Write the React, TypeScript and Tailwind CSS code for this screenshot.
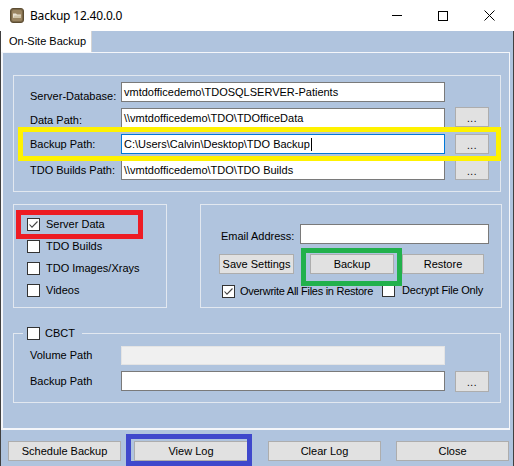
import React from "react";

const Check = ({ checked = false }: { checked?: boolean }) => (
  <span className="w-[13px] h-[13px] border border-[#333333] bg-white flex items-center justify-center shrink-0">
    {checked && (
      <svg width="11" height="11" viewBox="0 0 11 11">
        <polyline points="1.5,5.5 4,8.2 9.5,2.5" fill="none" stroke="#444444" strokeWidth="1.1" />
      </svg>
    )}
  </span>
);

const Btn = ({ children, className = "" }: { children: React.ReactNode; className?: string }) => (
  <div className={`h-[20px] bg-[#e1e1e1] border border-[#adadad] flex items-center justify-center shrink-0 ${className}`}>
    {children}
  </div>
);

const Dots = () => <span className="text-[10px] leading-[10px] pt-[3px] tracking-[0.5px]">...</span>;

const TextBox = ({
  value = "",
  className = "",
  focus = false,
  disabled = false,
}: {
  value?: string;
  className?: string;
  focus?: boolean;
  disabled?: boolean;
}) => (
  <div
    className={`h-[20px] border flex items-center pl-[2px] whitespace-nowrap overflow-hidden shrink-0 ${
      disabled ? "bg-[#f0f0f0] border-[#e4e4e4]" : "bg-white"
    } ${focus ? "border-[#0078d7]" : disabled ? "" : "border-[#7a7a7a]"} ${className}`}
  >
    <span>{value}</span>
    {focus && <span className="w-px h-[13px] bg-black ml-px" />}
  </div>
);

export default function App() {
  const groupBorder = "border border-[#e2e8f0]";
  return (
    <div className="relative w-[514px] h-[466px] overflow-hidden text-[11px] text-black font-['Liberation_Sans',Arial,sans-serif]">
      {/* Title bar */}
      <div className="h-[31px] bg-white flex items-center">
        <div className="ml-[10px] w-[14px] h-[15px]">
          <svg width="14" height="15" viewBox="0 0 14 15">
            <rect x="0.5" y="0.5" width="13" height="14" rx="2.5" fill="#7b6848" stroke="#5c4d33" />
            <rect x="2" y="2" width="10" height="11" rx="1.5" fill="#9a8562" />
            <path d="M3 10 L3 5.5 L6 5.5 L7 6.5 L11 6.5 L11 10 Z" fill="#e9e2d2" />
            <path d="M3 10 L4.5 7.5 L11 7.5 L11 10 Z" fill="#cfc3a8" />
          </svg>
        </div>
        <span className="ml-[6px] text-[12px] font-['Noto_Sans',sans-serif] tracking-[-0.2px]">Backup 12.40.0.0</span>
        <div className="ml-auto flex mr-[2px] h-full">
          <div className="w-[46px] h-full flex items-center justify-center">
            <div className="w-[10px] h-px bg-black" />
          </div>
          <div className="w-[46px] h-full flex items-center justify-center">
            <div className="w-[10px] h-[10px] border border-black" />
          </div>
          <div className="w-[46px] h-full flex items-center justify-center">
            <svg width="11" height="11" viewBox="0 0 11 11">
              <path d="M0.5 0.5 L10.5 10.5 M10.5 0.5 L0.5 10.5" stroke="black" strokeWidth="1" />
            </svg>
          </div>
        </div>
      </div>

      {/* Body */}
      <div className="h-[435px] border-x border-[#404040] bg-[#b0c4de] flex flex-col">
        {/* Tab strip */}
        <div className="h-[21px] flex">
          <div className="w-[91px] h-full bg-white border-r border-[#d4d4d4] flex items-center pl-[8px]">
            On-Site Backup
          </div>
        </div>

        {/* Tab page */}
        <div className="h-[378px] mr-[3px] border-l-2 border-t border-r border-b-2 border-[#f4f6fa] flex flex-col">
          {/* Paths group */}
          <div className={`ml-[10px] mt-[22px] w-[488px] h-[117px] ${groupBorder} flex flex-col gap-[6px] pt-[6px] pl-[16px]`}>
            <div className="flex items-start h-[20px]">
              <span className="w-[91px] leading-[20px] pt-[4px]">Server-Database:</span>
              <TextBox className="w-[324px]" value="vmtdofficedemo\TDOSQLSERVER-Patients" />
            </div>
            <div className="flex items-start h-[20px]">
              <span className="w-[91px] leading-[20px] pt-[2px]">Data Path:</span>
              <TextBox className="w-[324px]" value="\\vmtdofficedemo\TDO\TDOfficeData" />
              <Btn className="ml-[10px] w-[34px] -mt-px">
                <Dots />
              </Btn>
            </div>
            <div className="flex items-start h-[20px]">
              <span className="w-[91px] leading-[20px]">Backup Path:</span>
              <TextBox className="w-[324px]" focus value="C:\Users\Calvin\Desktop\TDO Backup" />
              <Btn className="ml-[10px] w-[34px]">
                <Dots />
              </Btn>
            </div>
            <div className="flex items-start h-[20px]">
              <span className="w-[91px] leading-[20px]">TDO Builds Path:</span>
              <TextBox className="w-[324px]" value="\\vmtdofficedemo\TDO\TDO Builds" />
              <Btn className="ml-[10px] w-[34px]">
                <Dots />
              </Btn>
            </div>
          </div>

          {/* Middle row */}
          <div className="flex ml-[10px] mt-[12px]">
            <div className={`w-[154px] h-[104px] ${groupBorder} flex flex-col pt-[8px] pl-[13px]`}>
              {[
                ["Server Data", true],
                ["TDO Builds", false],
                ["TDO Images/Xrays", false],
                ["Videos", false],
              ].map(([label, c]) => (
                <div key={label as string} className="h-[22px] flex items-center gap-[6px]">
                  <Check checked={c as boolean} />
                  <span>{label as string}</span>
                </div>
              ))}
            </div>
            <div className={`ml-[33px] w-[302px] h-[104px] ${groupBorder} flex flex-col pt-[19px]`}>
              <div className="flex items-start h-[20px] pl-[20px]">
                <span className="w-[79px] leading-[20px] pt-[2px]">Email Address:</span>
                <TextBox className="w-[189px]" />
              </div>
              <div className="flex mt-[10px] pl-[18px]">
                <Btn className="w-[75px]">Save Settings</Btn>
                <Btn className="w-[84px] ml-[16px]">Backup</Btn>
                <Btn className="w-[82px] ml-[8px]">Restore</Btn>
              </div>
              <div className="flex items-center mt-[11px] pl-[21px] h-[13px]">
                <Check checked />
                <span className="ml-[5px] tracking-[-0.27px]">Overwrite All Files in Restore</span>
                <div className="ml-[9px] -mt-[2px] flex items-center">
                  <Check />
                  <span className="ml-[7px] -mt-px tracking-[-0.2px]">Decrypt File Only</span>
                </div>
              </div>
            </div>
          </div>

          {/* CBCT group */}
          <fieldset className={`ml-[10px] mt-[19px] w-[488px] ${groupBorder} pb-[11px]`}>
            <legend className="ml-[9px] pl-[4px] pr-[7px] flex items-center gap-[5px] h-[13px]">
              <Check />
              <span>CBCT</span>
            </legend>
            <div className="flex items-center h-[19px] mt-[6px] pl-[16px]">
              <span className="w-[91px]">Volume Path</span>
              <TextBox className="w-[324px] !h-[19px]" disabled />
            </div>
            <div className="flex items-center h-[20px] mt-[6px] pl-[16px]">
              <span className="w-[91px]">Backup Path</span>
              <TextBox className="w-[324px]" />
              <Btn className="ml-[10px] w-[34px] !h-[21px]">
                <Dots />
              </Btn>
            </div>
          </fieldset>
        </div>

        {/* Bottom buttons */}
        <div className="flex mt-[11px] ml-[7px]">
          <Btn className="w-[113px]">Schedule Backup</Btn>
          <Btn className="w-[114px] ml-[13px]">View Log</Btn>
          <Btn className="w-[113px] ml-[20px]">Clear Log</Btn>
          <Btn className="w-[113px] ml-[15px]">Close</Btn>
        </div>
      </div>

      {/* Annotation overlays */}
      <div className="absolute left-[18px] top-[127px] w-[483px] h-[34px] border-[5px] border-[#fff200] pointer-events-none" />
      <div className="absolute left-[16px] top-[210px] w-[127px] h-[29px] border-[5px] border-[#ed1c24] pointer-events-none" />
      <div className="absolute left-[301px] top-[248px] w-[101px] h-[38px] border-[5px] border-[#22b14c] pointer-events-none" />
      <div className="absolute left-[126px] top-[434px] w-[126px] h-[32px] border-[5px] border-[#3f48cc] pointer-events-none" />
    </div>
  );
}
